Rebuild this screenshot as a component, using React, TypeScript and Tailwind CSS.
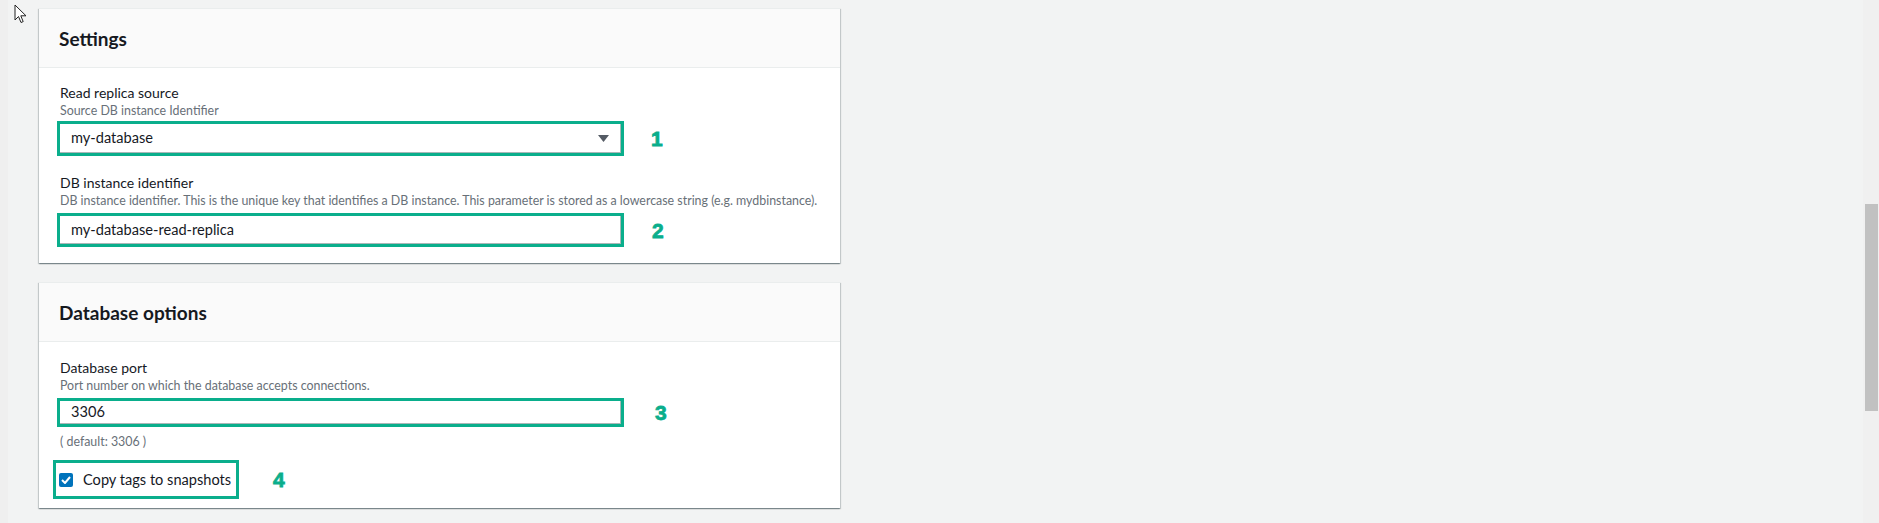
import React from "react";

const font = { fontFamily: 'Lato, "Noto Sans", Arial, sans-serif' };

function Num({ n }: { n: string }) {
  return (
    <span
      className="text-[21px] font-black leading-none text-[#0aae8c]"
      style={{ fontFamily: '"Liberation Sans", Arial, sans-serif', WebkitTextStroke: "0.8px #0aae8c" }}
    >
      {n}
    </span>
  );
}

function Field({
  value,
  select,
  h,
}: {
  value: string;
  select?: boolean;
  h: string;
}) {
  return (
    <div className={`w-[567px] ${h} border-[3px] border-[#0aae8c] bg-white`}>
      <div className="flex h-full items-center justify-between border-r border-b border-[#aab7b8] pl-[11px] pr-[11px]">
        <span className="text-[14.6px] text-[#16191f]">{value}</span>
        {select && (
          <svg width="11" height="7" viewBox="0 0 11 7">
            <path d="M0 0 H11 L5.5 7 Z" fill="#545b64" />
          </svg>
        )}
      </div>
    </div>
  );
}

function Card({
  title,
  children,
  bodyClass,
}: {
  title: string;
  children: React.ReactNode;
  bodyClass: string;
}) {
  return (
    <div className="w-[801px] border-t border-[#eaeded] bg-white shadow-[0_1px_1px_0_rgba(0,28,36,0.3),1px_1px_1px_0_rgba(0,28,36,0.15),-1px_1px_1px_0_rgba(0,28,36,0.15)]">
      <div className="flex h-[59px] items-center border-b border-[#eaeded] bg-[#fafafa] px-[20px]">
        <h2 className="text-[19px] font-bold leading-none text-[#16191f]">{title}</h2>
      </div>
      <div className={bodyClass}>{children}</div>
    </div>
  );
}

export default function App() {
  return (
    <div className="relative flex h-[523px] w-full overflow-hidden bg-[#f2f3f3]" style={font}>
      <div className="w-[8px] shrink-0 bg-[#efefef]" />
      <div className="flex flex-1 flex-col gap-[19px] pl-[31px] pt-[8px]">
        <Card title="Settings" bodyClass="px-[21px] pt-[15px] pb-[16px]">
          <div className="text-[14px] leading-[20px] text-[#16191f]">Read replica source</div>
          <div className="text-[12.4px] leading-[16px] text-[#687078]">Source DB instance Identifier</div>
          <div className="mt-[2px] ml-[-3px] flex items-center gap-[27px]">
            <Field value="my-database" select h="h-[35px]" />
            <Num n="1" />
          </div>
          <div className="mt-[17px] text-[14px] leading-[20px] text-[#16191f]">DB instance identifier</div>
          <div className="whitespace-nowrap text-[12.4px] leading-[16px] text-[#687078]">
            DB instance identifier. This is the unique key that identifies a DB instance. This parameter is stored as a lowercase string (e.g. mydbinstance).
          </div>
          <div className="mt-[4px] ml-[-3px] flex items-center gap-[28px]">
            <Field value="my-database-read-replica" h="h-[34px]" />
            <Num n="2" />
          </div>
        </Card>
        <Card title="Database options" bodyClass="px-[21px] pt-[16px] pb-[9px]">
          <div className="text-[14px] leading-[20px] text-[#16191f]">Database port</div>
          <div className="text-[12.4px] leading-[16px] text-[#687078]">Port number on which the database accepts connections.</div>
          <div className="mt-[4px] ml-[-3px] flex items-center gap-[31px]">
            <Field value="3306" h="h-[29px]" />
            <Num n="3" />
          </div>
          <div className="mt-[7px] text-[12.4px] leading-[16px] text-[#687078]">( default: 3306 )</div>
          <div className="mt-[10px] ml-[-7px] flex items-center gap-[34px]">
            <div className="flex h-[39px] w-[186px] items-center gap-[10px] border-[3px] border-[#0aae8c] pl-[3px]">
              <span className="flex h-[14px] w-[14px] items-center justify-center rounded-[2px] bg-[#0073bb]">
                <svg width="10" height="8" viewBox="0 0 10 8">
                  <path d="M1 4 L4 7 L9 1" fill="none" stroke="white" strokeWidth="2" />
                </svg>
              </span>
              <span className="whitespace-nowrap text-[14.6px] text-[#16191f]">Copy tags to snapshots</span>
            </div>
            <Num n="4" />
          </div>
        </Card>
      </div>
      <div className="w-[16px] shrink-0 bg-[#f0f0f0] pl-[2px] pr-[1px] pt-[204px]">
        <div className="h-[207px] w-full bg-[#c1c1c1]" />
      </div>
      <svg className="absolute left-[14px] top-[4px]" width="14" height="20" viewBox="0 0 14 20">
        <path d="M1 1 L1 16 L4.5 12.5 L7 18.5 L9.2 17.6 L6.8 11.8 L12 11.8 Z" fill="white" stroke="#222" strokeWidth="1" strokeLinejoin="round" />
      </svg>
    </div>
  );
}
